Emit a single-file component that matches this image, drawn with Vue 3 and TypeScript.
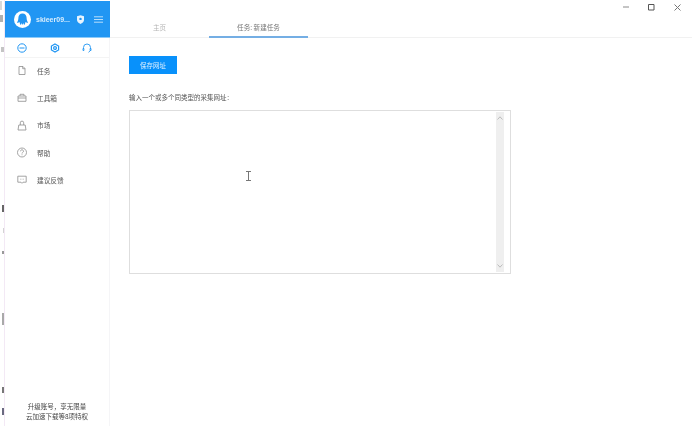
<script setup lang="ts">
const marks = [
  { top: 1, left: 0, h: 9, w: 2, c: '#d8d8d8' },
  { top: 15, left: 0, h: 7, w: 3, c: '#b0b0b0' },
  { top: 47, left: 1, h: 5, w: 3, c: '#c4c4c4' },
  { top: 205, left: 2, h: 7, w: 2, c: '#666' },
  { top: 228, left: 3, h: 5, w: 1, c: '#d4d4d4' },
  { top: 251, left: 2, h: 3, w: 2, c: '#999' },
  { top: 313, left: 2, h: 12, w: 2, c: '#a9a9a9' },
  { top: 387, left: 2, h: 6, w: 2, c: '#777' },
  { top: 408, left: 2, h: 7, w: 2, c: '#6a6a80' },
]
const menu = ['任务', '工具箱', '市场', '帮助', '建议反馈']
</script>

<template>
  <div class="app">
    <div class="strip">
      <i v-for="m in marks" :key="m.top" class="mark"
        :style="{ top: m.top + 'px', left: m.left + 'px', height: m.h + 'px', width: m.w + 'px', background: m.c }"></i>
    </div>
    <aside class="side">
      <header class="head">
        <svg class="avatar" width="17" height="17" viewBox="0 0 24 24">
          <circle cx="12" cy="12" r="12" fill="#fff" />
          <path d="M12 3.500c-3.700 0-5.800 2.800-5.800 6.200 0 2.400-.5 4.800-2.200 6.800 1.400.5 2.800.1 3.800-.9.2 1.400.6 2.900 1.700 4 .8-.8 1.300-1.900 1.500-3 .2 1.200.5 2.300 1 3.200.5-.9.8-2 1-3.200.2 1.100.7 2.200 1.500 3 1.100-1.100 1.500-2.600 1.700-4 1 1 2.400 1.400 3.800.9-1.700-2-2.200-4.400-2.200-6.800 0-3.400-2.100-6.200-5.800-6.200z" fill="#2196f3" />
        </svg>
        <span class="name">skieer09...</span>
        <svg class="badge" width="7" height="9" viewBox="0 0 8 10">
          <path d="M0 1.200 4 0l4 1.200v4.300C8 7.800 5.800 9.200 4 10 2.200 9.200 0 7.800 0 5.500z" fill="#e8f4fe" />
          <circle cx="4" cy="4.300" r="1.400" fill="#2196f3" />
        </svg>
        <svg class="burger" width="9" height="7" viewBox="0 0 9 7">
          <path d="M0 .8h9M0 3.500h9M0 6.200h9" stroke="#b9defb" stroke-width="1" />
        </svg>
      </header>
      <div class="body">
        <div class="tools">
          <svg width="10" height="10" viewBox="0 0 10 10" fill="none" stroke="#2196f3">
            <circle cx="5" cy="5" r="4.200" />
            <path d="M2.500 5h5" />
          </svg>
          <svg width="10" height="10" viewBox="0 0 10 10" fill="none" stroke="#2196f3" stroke-width="1.200">
            <path d="M5 .9 8.600 3v4L5 9.100 1.400 7V3z" />
            <circle cx="5" cy="5" r="1.400" />
          </svg>
          <svg width="10" height="10" viewBox="0 0 10 10" fill="none" stroke="#2196f3" stroke-width=".9">
            <path d="M1.500 6V4.500a3.500 3.500 0 0 1 7 0V6" />
            <path d="M1 5.500h.9v2H1zM8.100 5.500H9v2h-.9zM8.500 7.500 6.500 9.300" />
          </svg>
        </div>
        <nav class="menu">
          <div v-for="(item, i) in menu" :key="item" class="item">
            <svg width="10" height="11" viewBox="0 0 10 11" fill="none" stroke="#8d8d8d" stroke-width=".8">
              <template v-if="i === 0">
                <path d="M2 1.500h4L8 3.500v6H2z" /><path d="M5.700 1.500v2.200H8" />
              </template>
              <template v-else-if="i === 1">
                <path d="M1 4h8v5.300H1z" /><path d="M3 4V2.300h4V4M1 6h8" />
              </template>
              <template v-else-if="i === 2">
                <path d="M1.800 5h6.400L9 10H1z" /><path d="M3.300 5V2.800a1.700 1.700 0 0 1 3.400 0V5" />
              </template>
              <template v-else-if="i === 3">
                <circle cx="5" cy="5.500" r="4.500" /><path d="M3.500 4.300c0-2 3-2 3 0 0 1.200-1.500 1-1.500 2.200M5 7.400v.8" />
              </template>
              <template v-else>
                <path d="M.8 2.200h8.400v6H6L5 9.300 4 8.200H.8z" /><path d="M3 5.200h.6M4.700 5.200h.6M6.400 5.200H7" />
              </template>
            </svg>
            <span>{{ item }}</span>
          </div>
        </nav>
        <footer class="foot">
          <div>升级账号，享无限量</div>
          <div>云加速下载等8项特权</div>
        </footer>
      </div>
    </aside>
    <main class="main">
      <div class="titlebar">
        <svg width="6" height="6" viewBox="0 0 6 6"><path d="M0 3h6" stroke="#8a8a8a" /></svg>
        <svg width="7" height="7" viewBox="0 0 7 7"><path d="M.5.500h5.500v5.500H.5z" fill="none" stroke="#555" /></svg>
        <svg width="7" height="7" viewBox="0 0 7 7"><path d="M.5.500l6 6M6.500.500l-6 6" stroke="#777" /></svg>
      </div>
      <div class="tabs">
        <div class="tab">主页</div>
        <div class="tab active">任务: 新建任务</div>
      </div>
      <section class="content">
        <button class="save">保存网址</button>
        <p class="label">输入一个或多个同类型的采集网址：</p>
        <div class="area">
          <div class="scroll">
            <svg width="6" height="4" viewBox="0 0 6 4"><path d="M.5 3.500 3 .8l2.500 2.700" fill="none" stroke="#bbb" /></svg>
            <svg width="6" height="4" viewBox="0 0 6 4"><path d="M.5.500 3 3.200 5.500.500" fill="none" stroke="#bbb" /></svg>
          </div>
        </div>
        <svg class="cursor" width="5" height="10" viewBox="0 0 5 10"><path d="M0 .5h5M0 9.500h5M2.500 .5v9" fill="none" stroke="#777" /></svg>
      </section>
    </main>
  </div>
</template>

<style scoped>
.app {
  display: flex;
  width: 692px;
  height: 426px;
  overflow: hidden;
  background: #fff;
  font-family: "Noto Sans CJK SC", "Liberation Sans", sans-serif;
  color: #555;
  filter: blur(0.3px);
}
.strip {
  position: relative;
  flex: 0 0 5px;
  box-sizing: border-box;
  border-right: 1px solid #f3e9f5;
}
.mark {
  position: absolute;
  display: block;
}
.side {
  flex: 0 0 105px;
  display: flex;
  flex-direction: column;
  box-sizing: border-box;
  padding-top: 1px;
}
.head {
  height: 37px;
  flex: none;
  background: #2196f3;
  display: flex;
  align-items: center;
  padding-left: 9px;
  border-bottom: 1px solid #8ccaf9;
  box-sizing: border-box;
}
.avatar {
  flex: none;
}
.name {
  margin-left: 5px;
  width: 32px;
  flex: none;
  color: #d8edfd;
  font-size: 7px;
  font-weight: 700;
  font-family: "Liberation Sans", sans-serif;
  white-space: nowrap;
}
.badge {
  margin-left: 9px;
  flex: none;
}
.burger {
  margin-left: 10px;
  flex: none;
}
.body {
  flex: 1;
  min-height: 0;
  display: flex;
  flex-direction: column;
  border-right: 1px solid #f5f5f7;
}
.tools {
  height: 20px;
  flex: none;
  display: flex;
  justify-content: space-between;
  align-items: center;
  padding: 0 17px 0 12px;
  border-bottom: 1px solid #f4f4f4;
  box-sizing: border-box;
}
.menu {
  margin-top: -1px;
}
.item {
  height: 27.300px;
  display: flex;
  align-items: center;
  padding-left: 12px;
  gap: 10px;
  font-size: 6.700px;
  color: #555;
}
.foot {
  margin-top: auto;
  padding-bottom: 5px;
  text-align: center;
  font-size: 6.500px;
  line-height: 9.500px;
  color: #444;
}
.main {
  flex: 1;
  min-width: 0;
  display: flex;
  flex-direction: column;
}
.titlebar {
  height: 14px;
  flex: none;
  display: flex;
  justify-content: flex-end;
  align-items: center;
  gap: 19px;
  padding: 0 11px 0 0;
}
.tabs {
  height: 24px;
  flex: none;
  display: flex;
  border-bottom: 1px solid #f1f1f1;
  box-sizing: border-box;
}
.tab {
  width: 99px;
  height: 24px;
  box-sizing: border-box;
  text-align: center;
  font-size: 6.600px;
  line-height: 26px;
  color: #b5b5b5;
}
.tab.active {
  color: #777;
  border-bottom: 2px solid #74aee4;
}
.content {
  position: relative;
  padding: 18px 0 0 19px;
}
.save {
  display: block;
  width: 48px;
  height: 18px;
  padding: 0;
  border: 0;
  background: #0891fb;
  color: #dff0ff;
  font-family: inherit;
  font-size: 6.500px;
}
.label {
  margin: 17px 0 0;
  font-size: 6.500px;
  line-height: 12px;
  color: #555;
}
.area {
  margin-top: 7px;
  width: 382px;
  height: 164px;
  border: 1px solid #dedede;
  box-sizing: border-box;
  display: flex;
  justify-content: flex-end;
  padding: 1px 6px 1px 0;
}
.scroll {
  width: 8px;
  background: #efefef;
  display: flex;
  flex-direction: column;
  justify-content: space-between;
  align-items: center;
  padding: 4px 0;
  box-sizing: border-box;
}
.cursor {
  position: absolute;
  left: 136px;
  top: 133px;
}
</style>
